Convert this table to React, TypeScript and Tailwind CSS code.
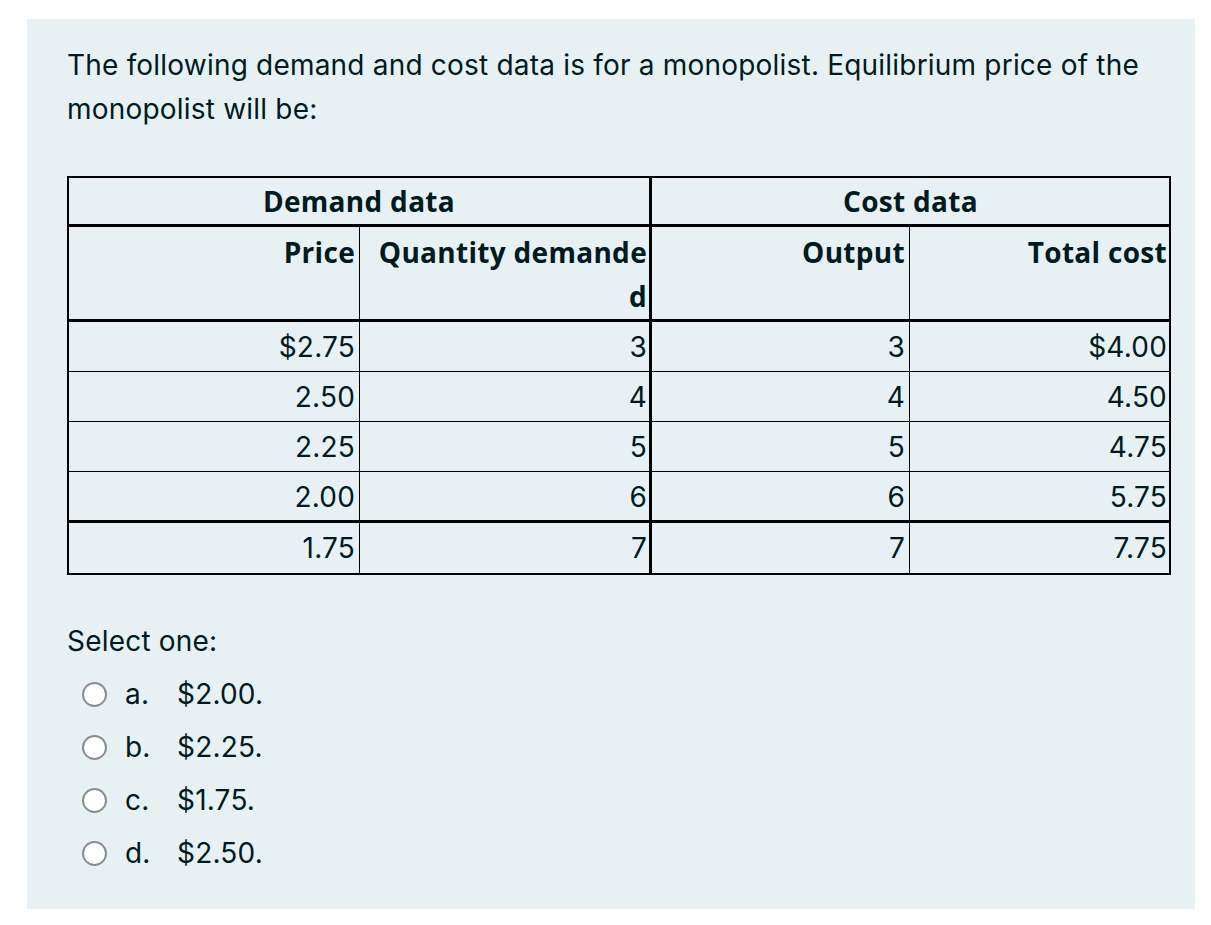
const demand = [
  { price: "$2.75", qty: "3" },
  { price: "2.50", qty: "4" },
  { price: "2.25", qty: "5" },
  { price: "2.00", qty: "6" },
  { price: "1.75", qty: "7" },
];

const cost = [
  { output: "3", total: "$4.00" },
  { output: "4", total: "4.50" },
  { output: "5", total: "4.75" },
  { output: "6", total: "5.75" },
  { output: "7", total: "7.75" },
];

const options = [
  { letter: "a.", text: "$2.00." },
  { letter: "b.", text: "$2.25." },
  { letter: "c.", text: "$1.75." },
  { letter: "d.", text: "$2.50." },
];

// border + height per data row (last two rows get thicker rules)
const rowStyles = [
  "h-[50px] border-b",
  "h-[50px] border-b",
  "h-[50px] border-b",
  "h-[51px] border-b-[3px]",
  "h-[52px] border-b-2",
];

const head = "font-['Open_Sans',sans-serif] font-bold text-[28px] tracking-[0.3px]";

export default function App() {
  return (
    <div className="min-h-[925px] bg-white pt-[19px] pl-[27px] font-['Inter',sans-serif] text-[28px] leading-[44px] tracking-[0.2px] text-[#001a1e]">
      <div className="w-[1168px] h-[890px] bg-[#e7f1f4] pl-10 pt-6">
        <p className="w-[1100px]">
          The following demand and cost data is for a monopolist. Equilibrium price of the monopolist will be:
        </p>

        <div className="mt-[45px] grid w-[1104px] grid-cols-[291px_292px_258px_261px] border-l-2 border-t-2 border-black">
          <div className={`${head} col-span-2 h-[49px] border-b-[3px] border-r-[3px] border-black pt-[1px] text-center`}>
            Demand data
          </div>
          <div className={`${head} col-span-2 h-[49px] border-b-[3px] border-r-2 border-black pt-[1px] text-center`}>
            Cost data
          </div>

          <div className={`${head} h-[95px] border-b-[3px] border-r border-black pt-[3px] pr-1 text-right`}>Price</div>
          <div className={`${head} h-[95px] border-b-[3px] border-r-[3px] border-black pt-[3px] pr-[2px] text-right`}>
            Quantity demande
            <br />d
          </div>
          <div className={`${head} h-[95px] border-b-[3px] border-r border-black pt-[3px] pr-1 text-right`}>Output</div>
          <div className={`${head} h-[95px] border-b-[3px] border-r-2 border-black pt-[3px] pr-[2px] text-right`}>Total cost</div>

          {demand.map((d, i) => (
            <div key={i} className="contents">
              <div className={`${rowStyles[i]} border-r border-black pt-[3px] pr-1 text-right`}>{d.price}</div>
              <div className={`${rowStyles[i]} border-r-[3px] border-black pt-[3px] pr-[2px] text-right`}>{d.qty}</div>
              <div className={`${rowStyles[i]} border-r border-black pt-[3px] pr-1 text-right`}>{cost[i].output}</div>
              <div className={`${rowStyles[i]} border-r-2 border-black pt-[3px] pr-[2px] text-right`}>{cost[i].total}</div>
            </div>
          ))}
        </div>

        <div className="mt-11">Select one:</div>
        <div className="mt-[9px] flex flex-col gap-[9px]">
          {options.map((o) => (
            <label key={o.letter} className="flex items-center pl-[15px]">
              <span className="h-[25px] w-[25px] rounded-full border-2 border-[#8a8d90] bg-white" />
              <span className="ml-[18px] w-[52px]">{o.letter}</span>
              <span>{o.text}</span>
            </label>
          ))}
        </div>
      </div>
    </div>
  );
}
